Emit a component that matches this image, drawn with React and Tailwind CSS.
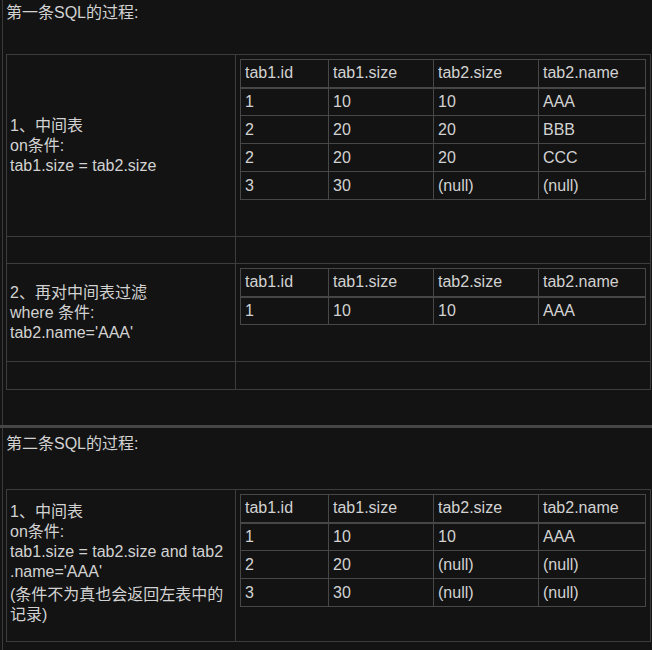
import React from "react";

const step1 = [
  ["1", "10", "10", "AAA"],
  ["2", "20", "20", "BBB"],
  ["2", "20", "20", "CCC"],
  ["3", "30", "(null)", "(null)"],
];
const step2 = [["1", "10", "10", "AAA"]];
const step3 = [
  ["1", "10", "10", "AAA"],
  ["2", "20", "(null)", "(null)"],
  ["3", "30", "(null)", "(null)"],
];

function DataTable({ rows }) {
  const head = ["tab1.id", "tab1.size", "tab2.size", "tab2.name"];
  return (
    <table className="w-[405px] table-fixed border-collapse border border-[#474747]">
      <colgroup>
        <col className="w-[88px]" />
        <col className="w-[105px]" />
        <col className="w-[105px]" />
        <col className="w-[107px]" />
      </colgroup>
      <tbody>
        <tr className="h-[28px]">
          {head.map((h) => (
            <td key={h} className="border border-[#474747] border-b-2 px-[4px] align-middle">
              {h}
            </td>
          ))}
        </tr>
        {rows.map((r, i) => (
          <tr key={i} className="h-[28px]">
            {r.map((c, j) => (
              <td key={j} className="border border-[#474747] px-[4px] align-middle">
                {c}
              </td>
            ))}
          </tr>
        ))}
      </tbody>
    </table>
  );
}

function Blank() {
  return (
    <>
      <td className="border border-[#3d3d3d]"></td>
      <td className="border border-[#3d3d3d]"></td>
    </>
  );
}

export default function App() {
  return (
    <div className="w-[652px] h-[650px] overflow-hidden bg-[#131313] text-[#d2d2d2] text-[16px] leading-[20px] font-['Liberation_Sans','Noto_Sans_CJK_SC',sans-serif]">
      <section className="h-[425px] ml-[2px] border-l border-[#3a3a3a] pt-[3px]">
        <p className="pl-[3px]">第一条SQL的过程:</p>
        <table className="mt-[31px] ml-[3px] w-[644px] table-fixed border-collapse border border-[#424242]">
          <colgroup>
            <col className="w-[229px]" />
            <col className="w-[415px]" />
          </colgroup>
          <tbody>
            <tr className="h-[182px]">
              <td className="border border-[#3d3d3d] pl-[3px] align-middle">
                1、中间表
                <br />
                on条件:
                <br />
                tab1.size = tab2.size
              </td>
              <td className="border border-[#3d3d3d] px-[4px] pt-[4px] align-top">
                <DataTable rows={step1} />
              </td>
            </tr>
            <tr className="h-[27px]">
              <Blank />
            </tr>
            <tr className="h-[98px]">
              <td className="border border-[#3d3d3d] pl-[3px] align-middle">
                2、再对中间表过滤
                <br />
                where 条件:
                <br />
                tab2.name='AAA'
              </td>
              <td className="border border-[#3d3d3d] px-[4px] pt-[4px] align-top">
                <DataTable rows={step2} />
              </td>
            </tr>
            <tr className="h-[28px]">
              <Blank />
            </tr>
          </tbody>
        </table>
      </section>
      <div className="h-[3px] bg-[#464646]"></div>
      <section className="h-[222px] ml-[2px] border-l border-[#3a3a3a] pt-[6px]">
        <p className="pl-[3px]">第二条SQL的过程:</p>
        <table className="mt-[35px] ml-[3px] w-[644px] table-fixed border-collapse border border-[#424242]">
          <colgroup>
            <col className="w-[229px]" />
            <col className="w-[415px]" />
          </colgroup>
          <tbody>
            <tr className="h-[152px]">
              <td className="border border-[#3d3d3d] pl-[3px] pb-[4px] align-middle whitespace-nowrap">
                1、中间表
                <br />
                on条件:
                <br />
                tab1.size = tab2.size and tab2
                <br />
                .name='AAA'
                <br />
                <span className="inline-block pt-[3px]">(条件不为真也会返回左表中的</span>
                <br />
                记录)
              </td>
              <td className="border border-[#3d3d3d] px-[4px] pt-[4px] align-top">
                <DataTable rows={step3} />
              </td>
            </tr>
          </tbody>
        </table>
      </section>
    </div>
  );
}
